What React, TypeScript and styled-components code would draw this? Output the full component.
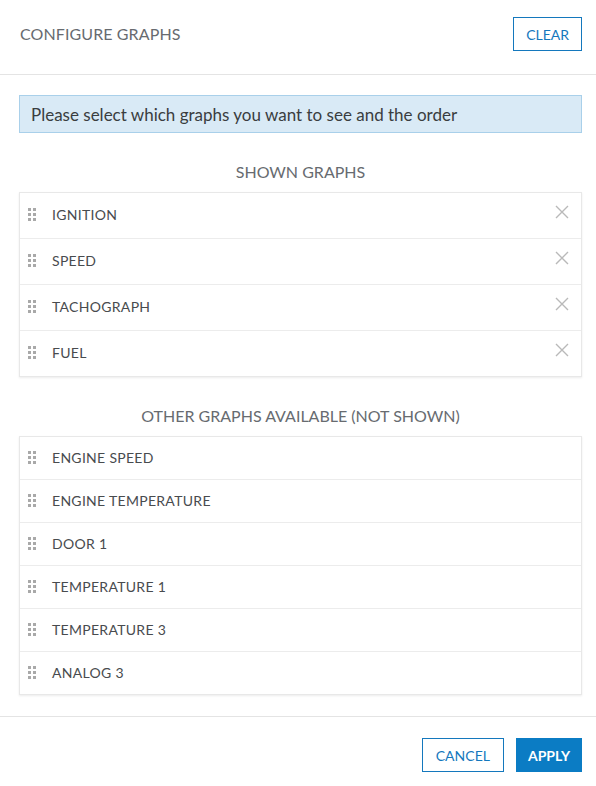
import styled, { createGlobalStyle } from "styled-components";

const shownGraphs = ["IGNITION", "SPEED", "TACHOGRAPH", "FUEL"];
const otherGraphs = [
  "ENGINE SPEED",
  "ENGINE TEMPERATURE",
  "DOOR 1",
  "TEMPERATURE 1",
  "TEMPERATURE 3",
  "ANALOG 3",
];

const GlobalStyle = createGlobalStyle`
  body {
    margin: 0;
    background: #fff;
    font-family: Lato, "Open Sans", sans-serif;
  }
`;

const DragHandle = () => (
  <Handle>
    {[0, 1, 2, 3, 4, 5].map((i) => (
      <span key={i} />
    ))}
  </Handle>
);

const CloseIcon = () => (
  <svg width="14" height="14" viewBox="0 0 14 14">
    <path d="M1 1 L13 13 M13 1 L1 13" stroke="#b9b9b9" strokeWidth="1.4" />
  </svg>
);

const App = () => {
  return (
    <Modal>
      <GlobalStyle />
      <Header>
        <Title>CONFIGURE GRAPHS</Title>
        <OutlineButton>CLEAR</OutlineButton>
      </Header>
      <Body>
        <Info>Please select which graphs you want to see and the order</Info>
        <SectionTitle>SHOWN GRAPHS</SectionTitle>
        <List>
          {shownGraphs.map((g) => (
            <Row key={g} tall>
              <DragHandle />
              <Label>{g}</Label>
              <RemoveButton>
                <CloseIcon />
              </RemoveButton>
            </Row>
          ))}
        </List>
        <SectionTitle>OTHER GRAPHS AVAILABLE (NOT SHOWN)</SectionTitle>
        <List>
          {otherGraphs.map((g) => (
            <Row key={g}>
              <DragHandle />
              <Label>{g}</Label>
            </Row>
          ))}
        </List>
      </Body>
      <Footer>
        <OutlineButton wide>CANCEL</OutlineButton>
        <PrimaryButton>APPLY</PrimaryButton>
      </Footer>
    </Modal>
  );
};

export default App;

const Modal = styled.div`
  width: 596px;
  height: 786px;
  display: flex;
  flex-direction: column;
  box-sizing: border-box;
`;

const Header = styled.div`
  height: 75px;
  box-sizing: border-box;
  padding: 17px 14px 0 20px;
  display: flex;
  justify-content: space-between;
  align-items: flex-start;
  border-bottom: 1px solid #e4e4e4;
`;

const Title = styled.h1`
  margin: 0;
  font-size: 16px;
  font-weight: 400;
  line-height: 34px;
  color: #676b70;
  letter-spacing: 0.1px;
`;

const OutlineButton = styled.button<{ wide?: boolean }>`
  height: 34px;
  padding: 0 ${(p) => (p.wide ? 13 : 12)}px;
  border: 1px solid #1478bd;
  background: #fff;
  color: #1478bd;
  font-family: Lato, sans-serif;
  font-size: 14px;
  cursor: pointer;
`;

const PrimaryButton = styled.button`
  height: 34px;
  padding: 0 11px;
  border: 1px solid #0b7cc4;
  background: #0b7cc4;
  color: #fff;
  font-family: Lato, sans-serif;
  font-size: 14px;
  font-weight: 700;
  cursor: pointer;
`;

const Body = styled.div`
  padding: 20px 14px 0 19px;
  display: flex;
  flex-direction: column;
`;

const Info = styled.div`
  height: 38px;
  box-sizing: border-box;
  display: flex;
  align-items: center;
  padding: 0 11px;
  background: #d9eaf6;
  border: 1px solid #a9d0ea;
  color: #3a3d40;
  font-size: 17px;
`;

const SectionTitle = styled.h2`
  margin: 0;
  padding: 30px 0 11px;
  text-align: center;
  font-size: 16px;
  font-weight: 400;
  line-height: 18px;
  color: #676b70;
`;

const List = styled.div`
  border: 1px solid #e8e8e8;
  box-shadow: 0 1px 2px rgba(0, 0, 0, 0.08);
  display: flex;
  flex-direction: column;
`;

const Row = styled.div<{ tall?: boolean }>`
  height: ${(p) => (p.tall ? 46 : 43)}px;
  box-sizing: border-box;
  display: flex;
  align-items: center;
  padding: 0 12px 0 8px;
  border-top: 1px solid #ececec;
  &:first-child {
    border-top: none;
    height: ${(p) => (p.tall ? 45 : 42)}px;
  }
`;

const Handle = styled.div`
  display: grid;
  grid-template-columns: repeat(2, 3px);
  grid-auto-rows: 3px;
  gap: 2px;
  margin-right: 16px;
  margin-top: -2px;
  span {
    background: #a9a9a9;
  }
`;

const Label = styled.span`
  flex: 1;
  font-size: 14px;
  color: #484b4e;
  letter-spacing: 0.3px;
  margin-top: -2px;
`;

const RemoveButton = styled.div`
  display: flex;
  margin-top: -8px;
  cursor: pointer;
`;

const Footer = styled.div`
  margin-top: 21px;
  padding: 21px 14px 0;
  border-top: 1px solid #e4e4e4;
  display: flex;
  justify-content: flex-end;
  gap: 12px;
`;
